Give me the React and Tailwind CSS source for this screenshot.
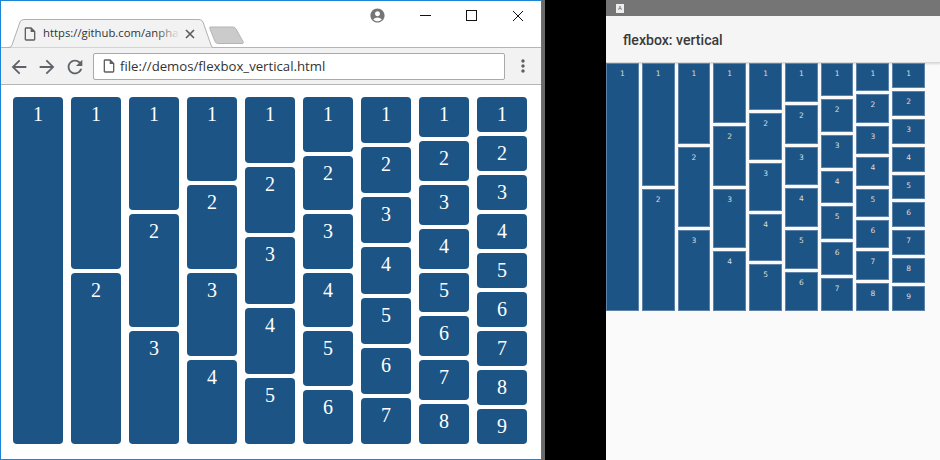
import React from "react";
import { MdArrowBack, MdArrowForward, MdRefresh, MdMoreVert, MdAccountCircle, MdOutlineInsertDriveFile } from "react-icons/md";

const counts = [1, 2, 3, 4, 5, 6, 7, 8, 9];

function Tab() {
  return (
    <div className="relative ml-[6px] h-[29px] w-[206px] mb-[-1px]">
      <svg className="absolute inset-0" width="206" height="29" viewBox="0 0 206 29">
        <path d="M0.5 28.5 L2 28.5 Q4 28.5 5 26 L13 3 Q14 0.5 17 0.5 L192 0.5 Q195 0.5 196 3 L204 26 Q205 28.5 206 28.5" fill="#f2f2f2" stroke="#b0b0b0" />
      </svg>
      <div className="relative flex h-full items-center pl-[15px] pt-[1px]">
        <MdOutlineInsertDriveFile className="w-[16px] h-[16px] text-[#5f5f5f] shrink-0" />
        <div className="relative ml-[5px] mt-[-1px] w-[137px] overflow-hidden whitespace-nowrap text-[11.3px] text-[#333] font-['Open_Sans',sans-serif]">
          https://github.com/anpha
          <div className="absolute right-0 top-0 h-full w-[24px] bg-gradient-to-r from-transparent to-[#f2f2f2]" />
        </div>
        <svg className="ml-[5px] shrink-0" width="10" height="10" viewBox="0 0 10 10">
          <path d="M1 1 L9 9 M9 1 L1 9" stroke="#5a5a5a" strokeWidth="1.6" />
        </svg>
      </div>
    </div>
  );
}

function Browser() {
  return (
    <div className="flex h-[460px] w-[542px] flex-col border-l border-t border-r border-b border-[#1d85d6] bg-white">
      <div className="relative flex h-[47px] items-end border-b border-[#b5b5b5]">
        <Tab />
        <svg className="mb-[2px] ml-[-4px] self-end" width="36" height="19" viewBox="0 0 36 19">
          <path d="M1 1 L24 1 Q26 1 27 3 L34 15.5 Q35 17.5 33 17.5 L9 17.5 Q7 17.5 6 15.5 L1 3 Q0.5 1 1 1 Z" fill="#cbcbcb" stroke="#b5b5b5" />
        </svg>
        <div className="absolute right-[17px] top-[6px] flex items-center">
          <MdAccountCircle className="mr-[34px] h-[17px] w-[17px] text-[#757575]" />
          <svg className="mr-[35px]" width="11" height="11" viewBox="0 0 11 11"><path d="M0 5.5 H11" stroke="#111" /></svg>
          <svg className="mr-[35px]" width="11" height="11" viewBox="0 0 11 11"><rect x="0.5" y="0.5" width="10" height="10" fill="none" stroke="#111" /></svg>
          <svg width="12" height="12" viewBox="0 0 12 12"><path d="M1 1 L11 11 M11 1 L1 11" stroke="#111" /></svg>
        </div>
      </div>
      <div className="flex h-[37px] items-center border-b border-[#b5b5b5] bg-[#f2f2f2] pl-[7px] pr-[8px]">
        <MdArrowBack className="mt-[1px] h-[22px] w-[22px] text-[#5f6368]" />
        <MdArrowForward className="ml-[6px] mt-[1px] h-[22px] w-[22px] text-[#5f6368]" />
        <MdRefresh className="ml-[6px] mt-[1px] h-[22px] w-[22px] text-[#5f6368]" />
        <div className="ml-[7px] flex h-[27px] w-[412px] items-center rounded-[2px] border border-[#a9a9a9] bg-white pl-[7px]">
          <MdOutlineInsertDriveFile className="h-[16px] w-[16px] text-[#5f5f5f]" />
          <span className="ml-[3px] mt-[1px] text-[13.2px] text-[#333] font-['Open_Sans',sans-serif]">file://demos/flexbox_vertical.html</span>
        </div>
        <MdMoreVert className="ml-[8px] h-[20px] w-[20px] text-[#5f5f5f]" />
      </div>
      <div className="flex flex-1 gap-2 pb-[15px] pl-[12px] pt-[12px]">
        {counts.map((n) => (
          <div key={n} className="flex w-[50px] flex-col gap-1">
            {Array.from({ length: n }, (_, i) => (
              <div key={i} className="flex-1 basis-0 rounded-[4px] bg-[#1c5485] pt-[6px] text-center text-[20px] leading-[23px] text-white font-['Liberation_Serif',serif]">
                {i + 1}
              </div>
            ))}
          </div>
        ))}
      </div>
    </div>
  );
}

function Device() {
  return (
    <div className="flex h-[460px] w-[334px] flex-col bg-[#fafafa]">
      <div className="flex h-[16px] items-center bg-[#757575] pl-[10px]">
        <div className="flex h-[9px] w-[8px] items-center justify-center bg-[#eeeeee] text-[6px] leading-none text-[#555] font-['Roboto',sans-serif]">A</div>
      </div>
      <div className="flex h-[47px] items-center border-b border-[#d8d8d8] bg-[#f5f5f5] pl-[17px] pt-[4px] shadow-[0_1px_2px_rgba(0,0,0,0.15)]">
        <span className="text-[14.1px] font-medium text-[#3a3a3a] font-['Roboto',sans-serif]">flexbox: vertical</span>
      </div>
      <div className="flex h-[248px] w-[319px] gap-[3px]">
        {counts.map((n) => (
          <div key={n} className="flex flex-1 flex-col gap-[3px]">
            {Array.from({ length: n }, (_, i) => (
              <div key={i} className="flex-1 basis-0 border border-[#5f83a8] bg-[#1c5485] pt-[4px] text-center text-[7.5px] leading-[11px] text-[#dddddd] font-['DejaVu_Sans',sans-serif]">
                {i + 1}
              </div>
            ))}
          </div>
        ))}
      </div>
    </div>
  );
}

export default function App() {
  return (
    <div className="flex h-[460px] w-[940px] bg-black">
      <Browser />
      <div className="h-full w-[3px] bg-[#6a6a6a]" />
      <div className="h-full w-[61px]" />
      <Device />
    </div>
  );
}
